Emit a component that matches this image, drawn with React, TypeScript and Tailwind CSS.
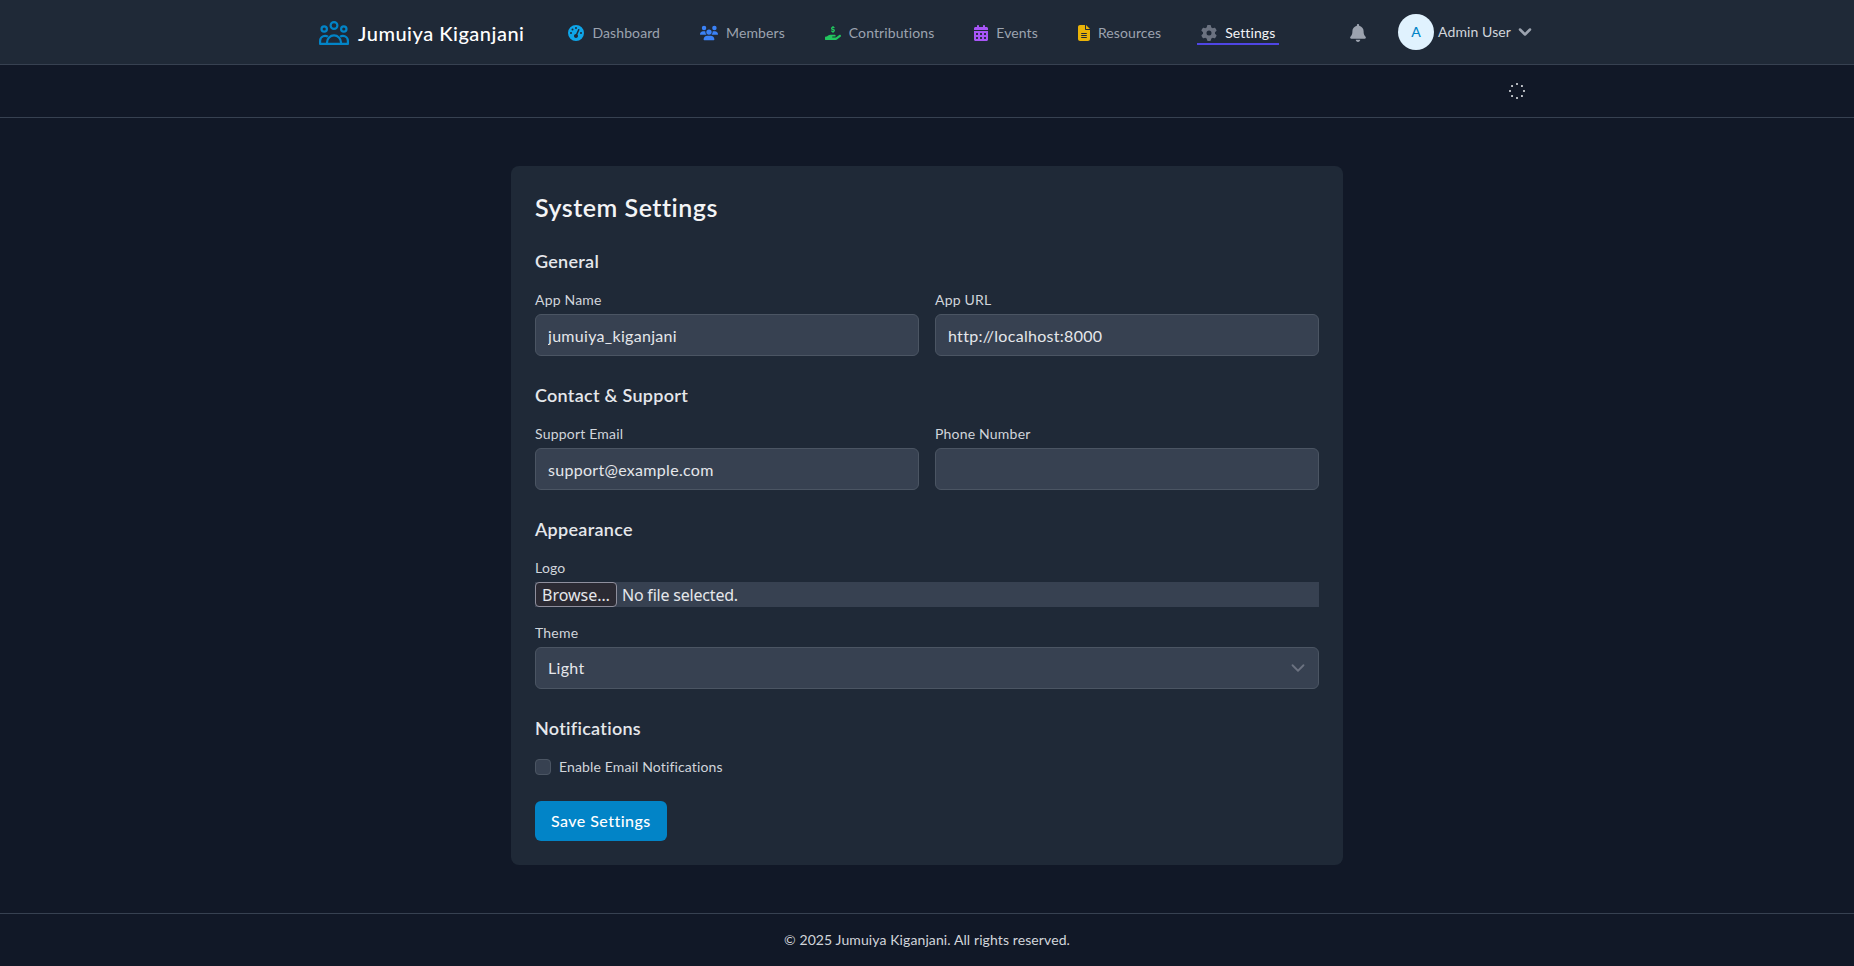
import { ChevronDown } from 'lucide-react';
import { FaBell, FaCalendarDays, FaFileLines, FaGaugeHigh, FaGear, FaHandHoldingDollar, FaUsers } from 'react-icons/fa6';

const navItems = [
  { label: 'Dashboard', icon: FaGaugeHigh, color: 'text-[#0ea5e9]', size: 'w-4 h-4' },
  { label: 'Members', icon: FaUsers, color: 'text-[#3b82f6]', size: 'w-[18px] h-4' },
  { label: 'Contributions', icon: FaHandHoldingDollar, color: 'text-[#22c55e]', size: 'w-4 h-4' },
  { label: 'Events', icon: FaCalendarDays, color: 'text-[#a855f7]', size: 'w-3.5 h-4' },
  { label: 'Resources', icon: FaFileLines, color: 'text-[#eab308]', size: 'w-3 h-4' },
];

function Logo() {
  return (
    <svg viewBox="0 0 30 24" fill="none" stroke="currentColor" strokeWidth="2.2" strokeLinejoin="round" className="w-[30px] h-6 mr-[9px] mt-[2px] text-[#0284c7]">
      <circle cx="15" cy="4.5" r="3.4" />
      <circle cx="5.2" cy="8" r="2.7" />
      <circle cx="24.8" cy="8" r="2.7" />
      <path d="M8 22.9v-1.5a7 7 0 0 1 14 0v1.5z" />
      <path d="M8 22.9H1.1v-3.2a5 5 0 0 1 7.8-4" />
      <path d="M22 22.9h6.9v-3.2a5 5 0 0 0-7.8-4" />
    </svg>
  );
}

function Spinner() {
  const dots = [0, 45, 90, 135, 180, 225, 270, 315];
  return (
    <svg width="18" height="18" viewBox="0 0 18 18" className="text-[#e5e7eb]">
      {dots.map((d) => (
        <circle key={d} cx="9" cy="2" r="1" fill="currentColor" transform={`rotate(${d} 9 9)`} />
      ))}
    </svg>
  );
}

function Field({ label, value }: { label: string; value: string }) {
  return (
    <div>
      <label className="block text-sm leading-5 tracking-[0.2px] text-[#d1d5db] mb-1">{label}</label>
      <input
        type="text"
        defaultValue={value}
        className="block w-full h-[42px] px-3 bg-[#374151] border border-[#4b5563] rounded-md text-base tracking-[0.3px] text-[#e5e7eb]"
      />
    </div>
  );
}

function SectionTitle({ children }: { children: string }) {
  return <h3 className="pt-px text-lg leading-7 tracking-[0.28px] font-semibold text-[#e5e7eb] mb-[15px]">{children}</h3>;
}

export default function App() {
  return (
    <div className="min-h-screen flex flex-col bg-[#111827] font-['Lato',sans-serif] text-[#e5e7eb]">
      <nav className="bg-[#1f2937] border-b border-[#374151]">
        <div className="max-w-7xl mx-auto px-8 h-16 flex items-center">
          <Logo />
          <span className="text-xl font-medium tracking-[0.5px] text-white whitespace-nowrap mt-[2px]">Jumuiya Kiganjani</span>
          <div className="flex items-center gap-10 ml-11 mt-[2px] text-sm tracking-[0.1px] text-[#9ca3af]">
            {navItems.map((item) => (
              <a key={item.label} className="flex items-center gap-2 h-8">
                <item.icon className={`${item.size} ${item.color}`} />
                {item.label}
              </a>
            ))}
            <a className="flex items-center gap-2 h-6 pt-[2px] px-1 border-b-2 border-[#4f46e5] text-[#f3f4f6] ml-[-4px]">
              <FaGear className="w-4 h-4 text-[#6b7280]" />
              Settings
            </a>
          </div>
          <div className="ml-auto flex items-center">
            <FaBell className="w-4 h-[18px] text-[#9ca3af] mr-8 mt-[1px]" />
            <div className="w-9 h-9 rounded-full bg-[#e0f2fe] text-[#0284c7] text-sm font-medium flex items-center justify-center">A</div>
            <span className="ml-1 text-sm tracking-[0.1px] text-[#d1d5db]">Admin User</span>
            <ChevronDown strokeWidth={3} className="ml-1 w-5 h-5 text-[#9ca3af]" />
          </div>
        </div>
      </nav>

      <div className="border-b border-[#374151]">
        <div className="max-w-7xl mx-auto px-8 h-[52px] flex items-center justify-end">
          <div className="pr-[9px]">
            <Spinner />
          </div>
        </div>
      </div>

      <main className="flex-1 w-full max-w-4xl mx-auto px-8 pt-12 pb-12">
        <div className="bg-[#1f2937] rounded-lg p-6">
          <h2 className="text-[25px] leading-8 tracking-[0.5px] font-semibold text-[#f3f4f6] mt-px mb-[23px]">System Settings</h2>

          <SectionTitle>General</SectionTitle>
          <div className="grid grid-cols-2 gap-4 mb-6">
            <Field label="App Name" value="jumuiya_kiganjani" />
            <Field label="App URL" value="http://localhost:8000" />
          </div>

          <SectionTitle>Contact &amp; Support</SectionTitle>
          <div className="grid grid-cols-2 gap-4 mb-6">
            <Field label="Support Email" value="support@example.com" />
            <Field label="Phone Number" value="" />
          </div>

          <SectionTitle>Appearance</SectionTitle>
          <label className="block text-sm leading-5 tracking-[0.2px] text-[#d1d5db] mb-1">Logo</label>
          <div className="flex items-center h-[25px] bg-[#374151] mb-4">
            <span className="h-[25px] px-[6px] flex items-center bg-[#2b2a33] border border-[#8f8f9d] rounded text-base text-[#e5e7eb] font-['Noto_Sans',sans-serif]">Browse…</span>
            <span className="ml-[5px] text-base tracking-[-0.2px] text-[#e5e7eb] font-['Noto_Sans',sans-serif]">No file selected.</span>
          </div>
          <label className="block text-sm leading-5 tracking-[0.2px] text-[#d1d5db] mb-1">Theme</label>
          <div className="relative mb-6">
            <select className="block w-full h-[42px] px-3 appearance-none bg-[#374151] border border-[#4b5563] rounded-md text-base tracking-[0.3px] text-[#e5e7eb]">
              <option>Light</option>
            </select>
            <ChevronDown className="absolute right-[10px] top-[10px] w-[22px] h-[22px] text-[#6b7280]" />
          </div>

          <SectionTitle>Notifications</SectionTitle>
          <label className="flex items-center gap-2 mb-6 text-sm tracking-[0.14px] text-[#d1d5db]">
            <input type="checkbox" className="w-4 h-4 appearance-none bg-[#374151] border border-[#4b5563] rounded" />
            Enable Email Notifications
          </label>

          <button type="button" className="h-10 px-4 bg-[#0284c7] rounded-md text-base font-medium tracking-[0.45px] text-white">
            Save Settings
          </button>
        </div>
      </main>

      <footer className="border-t border-[#374151] h-[53px] flex items-center justify-center text-sm tracking-[0.1px] text-[#d1d5db]">
        © 2025 Jumuiya Kiganjani. All rights reserved.
      </footer>
    </div>
  );
}
